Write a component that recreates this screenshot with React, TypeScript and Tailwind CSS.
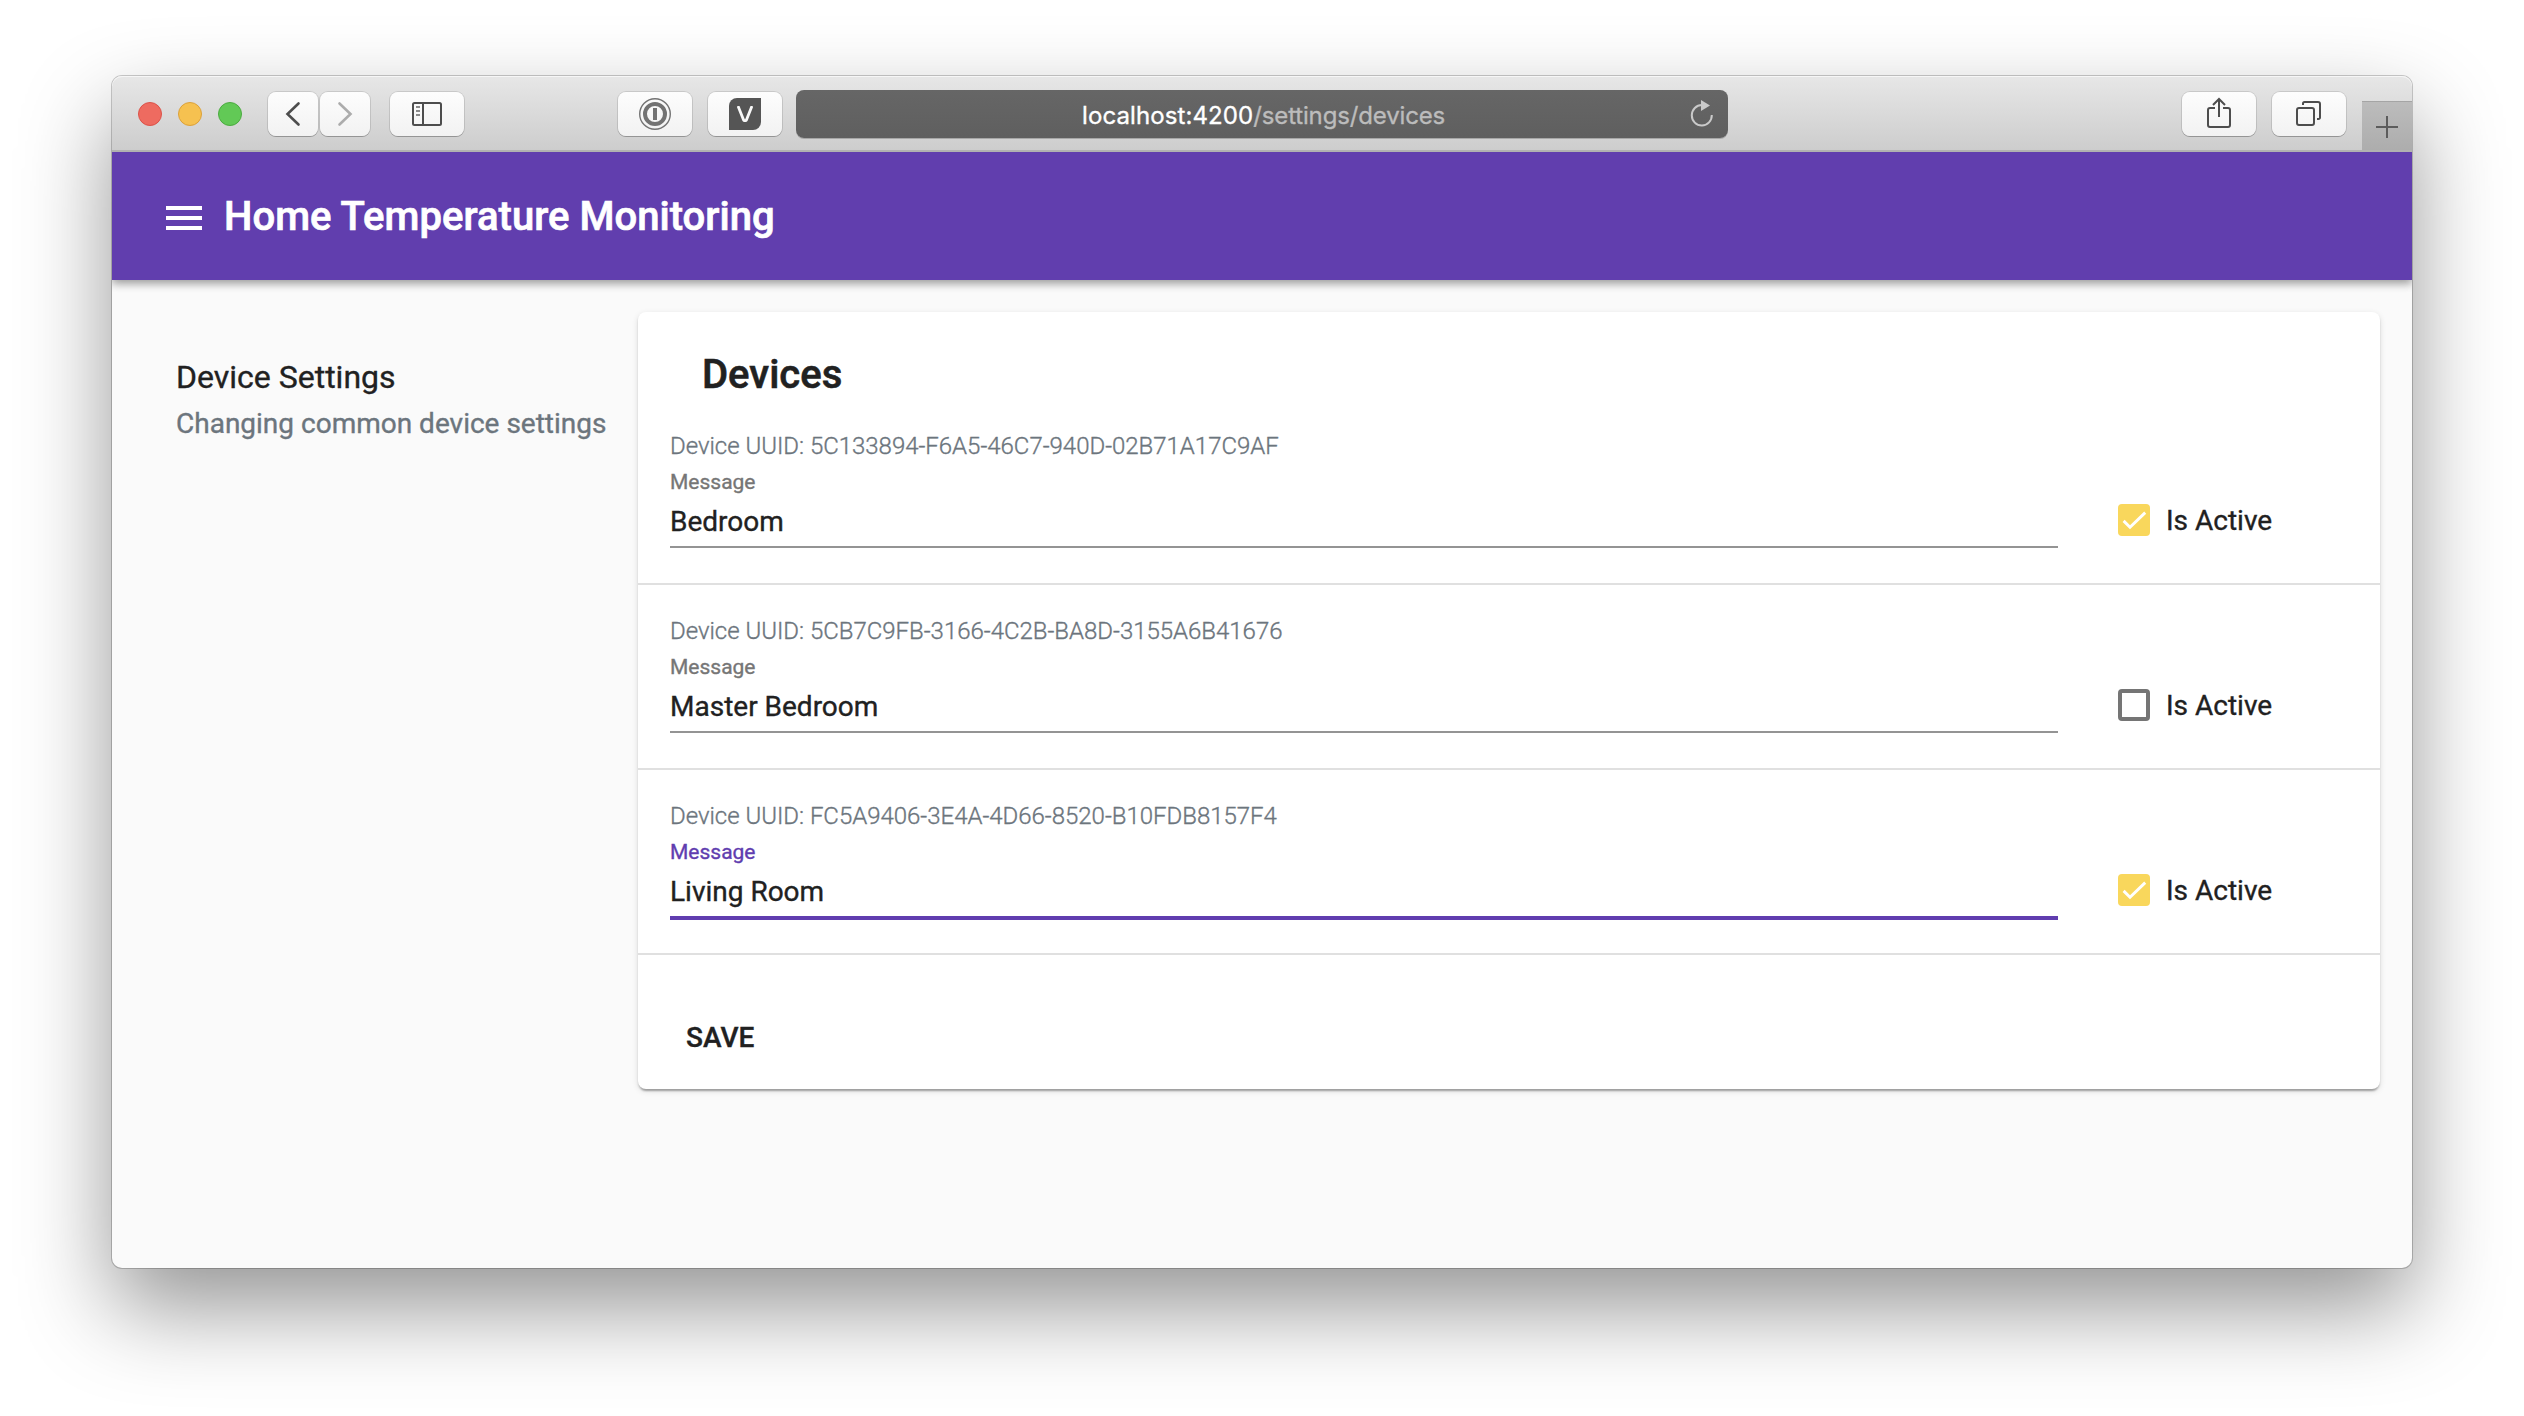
import React from "react";

type Device = { uuid: string; name: string; active: boolean; focused?: boolean };

const devices: Device[] = [
  { uuid: "5C133894-F6A5-46C7-940D-02B71A17C9AF", name: "Bedroom", active: true },
  { uuid: "5CB7C9FB-3166-4C2B-BA8D-3155A6B41676", name: "Master Bedroom", active: false },
  { uuid: "FC5A9406-3E4A-4D66-8520-B10FDB8157F4", name: "Living Room", active: true, focused: true },
];

function ToolButton({ className, children }: { className: string; children: React.ReactNode }) {
  return (
    <button
      className={`flex h-11 shrink-0 items-center justify-center rounded-[8px] bg-gradient-to-b from-[#fdfdfd] to-[#f2f2f2] shadow-[0_0_0_1px_rgba(0,0,0,0.11),0_1px_0_0_rgba(0,0,0,0.2)] ${className}`}
    >
      {children}
    </button>
  );
}

function Toolbar() {
  return (
    <div className="flex h-[76px] items-start rounded-t-[10px] border-b-2 border-[#b1b1b1] bg-gradient-to-b from-[#e7e7e7] to-[#cdcdcd] shadow-[inset_0_1px_0_#f6f6f6]">
      <div className="mt-[26px] ml-[26px] flex gap-4">
        <span className="size-6 rounded-full border border-[#dc5249] bg-[#ee6b60]" />
        <span className="size-6 rounded-full border border-[#dca13a] bg-[#f6c150]" />
        <span className="size-6 rounded-full border border-[#4bab40] bg-[#62c956]" />
      </div>
      <div className="mt-4 ml-[26px] flex gap-[2px]">
        <ToolButton className="w-[50px]">
          <svg width="50" height="44" viewBox="0 0 50 44" fill="none" stroke="#4d4d4d" strokeWidth="2.6" strokeLinecap="round">
            <path d="M30.5 11.5 19.5 22 30.5 32.5" />
          </svg>
        </ToolButton>
        <ToolButton className="w-[50px]">
          <svg width="50" height="44" viewBox="0 0 50 44" fill="none" stroke="#acacac" strokeWidth="2.6" strokeLinecap="round">
            <path d="M19.5 11.5 30.5 22 19.5 32.5" />
          </svg>
        </ToolButton>
      </div>
      <ToolButton className="mt-4 ml-5 w-[74px]">
        <svg width="30" height="24" viewBox="0 0 30 24" fill="none" stroke="#4d4d4d" strokeWidth="2">
          <rect x="1" y="1" width="28" height="22" rx="1.5" />
          <path d="M11 1v22" />
          <path d="M4 5h4M4 9h4M4 13h4" stroke="#8a8a8a" />
        </svg>
      </ToolButton>
      <ToolButton className="mt-4 ml-[154px] w-[74px]">
        <svg width="32" height="32" viewBox="0 0 32 32" fill="none" stroke="#737373">
          <circle cx="16" cy="16" r="15.3" strokeWidth="1.4" />
          <circle cx="16" cy="16" r="10" strokeWidth="4" />
          <path d="M16 10v12" strokeWidth="4" />
        </svg>
      </ToolButton>
      <ToolButton className="mt-4 ml-4 w-[74px]">
        <span className="flex size-8 items-center justify-center rounded-tl-[8px] rounded-br-[8px] bg-[#555]">
          <svg width="16" height="16" viewBox="0 0 16 16" fill="none" stroke="#f8f8f8" strokeWidth="2.8">
            <path d="M1 0 6.8 14.6H9.2L15 0" strokeLinejoin="bevel" />
          </svg>
        </span>
      </ToolButton>
      <div className="mt-[14px] ml-[14px] flex h-12 w-[932px] shrink-0 items-center rounded-[8px] bg-gradient-to-b from-[#666] to-[#5f5f5f] shadow-[0_1px_0_rgba(0,0,0,0.2)]">
        <div className="mt-[3px] ml-[286px] w-[480px] font-['Inter',sans-serif] text-[24px] leading-[30px] tracking-[0.1px] whitespace-nowrap text-[#bcbcbc]">
          <span className="text-white">localhost:4200</span>
          <span className="tracking-[-0.15px]">/settings/devices</span>
        </div>
        <svg className="ml-[127px]" width="26" height="28" viewBox="0 0 26 28">
          <path d="M22.8 15A10 10.3 0 1 1 13 5" fill="none" stroke="#cacaca" strokeWidth="2" />
          <path d="M12 0v11l9-5.5z" fill="#cacaca" />
        </svg>
      </div>
      <ToolButton className="mt-4 ml-[454px] w-[74px]">
        <svg className="-mt-1" width="24" height="32" viewBox="0 0 24 32" fill="none" stroke="#4d4d4d" strokeWidth="2">
          <path d="M8 12H3a2 2 0 0 0-2 2v15a2 2 0 0 0 2 2h18a2 2 0 0 0 2-2V14a2 2 0 0 0-2-2h-5" />
          <path d="M12 21V3M6 9l6-6 6 6" />
        </svg>
      </ToolButton>
      <ToolButton className="mt-4 ml-4 w-[74px]">
        <svg className="mr-[2px] mb-[2px]" width="26" height="26" viewBox="0 0 26 26" fill="none" stroke="#4d4d4d" strokeWidth="2">
          <rect x="2" y="8" width="17" height="17" rx="2" />
          <path d="M8 5V3.5A1.5 1.5 0 0 1 9.5 2H23a2 2 0 0 1 2 2v13.5a1.5 1.5 0 0 1-1.5 1.5H22" />
        </svg>
      </ToolButton>
      <button className="mt-[25px] ml-4 flex h-[49px] w-[50px] shrink-0 items-center justify-center border-t border-[#a5a5a5] bg-gradient-to-b from-[#bcbcbc] to-[#adadad] pt-[2px]">
        <svg width="22" height="22" viewBox="0 0 22 22" stroke="#5c5c5c" strokeWidth="2">
          <path d="M11 0v22M0 11h22" />
        </svg>
      </button>
    </div>
  );
}

function Checkbox({ checked }: { checked: boolean }) {
  return checked ? (
    <span className="flex size-8 shrink-0 rounded-[4px] bg-[#f9d75c]">
      <svg width="32" height="32" viewBox="0 0 32 32" fill="none" stroke="#fff" strokeWidth="2.9">
        <path d="M5.6 16.9 12 23.3 27.2 8.6" />
      </svg>
    </span>
  ) : (
    <span className="size-8 shrink-0 rounded-[4px] border-4 border-[#757575]" />
  );
}

function DeviceRow({ device }: { device: Device }) {
  return (
    <div className="flex h-[185px] border-b-2 border-[#e0e0e0] px-8">
      <div className="w-[1388px]">
        <div className="mt-[30px] text-[24px] leading-8 font-light tracking-[-0.02px] whitespace-nowrap text-[#6c757d]">
          Device UUID: {device.uuid}
        </div>
        <div className={`mt-1 text-[21px] leading-8 ${device.focused ? "text-[#603daf]" : "text-[#767676]"}`}>Message</div>
        <div
          className={`mt-[2px] h-[46px] text-[28px] leading-[44px] ${
            device.focused ? "shadow-[0_4px_0_#603daf]" : "shadow-[0_2px_0_#949494]"
          }`}
        >
          {device.name}
        </div>
      </div>
      <label className="mt-[104px] ml-[60px] flex h-8 items-center gap-4 text-[28px]">
        <Checkbox checked={device.active} />
        <span className="pt-[2px] whitespace-nowrap">Is Active</span>
      </label>
    </div>
  );
}

export default function App() {
  return (
    <div className="h-[1416px] w-[2524px] overflow-hidden bg-white px-[112px] pt-[76px] font-['Roboto',sans-serif] text-[#212121] [-webkit-text-stroke:0.35px]">
      <div className="flex h-[1192px] w-[2300px] flex-col rounded-[10px] bg-[#fafafa] shadow-[0_0_0_1px_rgba(0,0,0,0.2),0_40px_90px_rgba(0,0,0,0.42)]">
        <Toolbar />
        <header className="z-10 flex h-32 shrink-0 items-center bg-[#613eae] pl-[54px] text-white shadow-[0_4px_8px_rgba(0,0,0,0.24),0_2px_10px_rgba(0,0,0,0.2)] [clip-path:inset(0_0_-30px_0)]">
          <div className="mt-1 flex w-9 flex-col gap-[6px]">
            <span className="h-1 bg-white" />
            <span className="h-1 bg-white" />
            <span className="h-1 bg-white" />
          </div>
          <h1 className="mt-[2px] ml-[22px] text-[40px] leading-[48px] font-medium tracking-[0.04px] whitespace-nowrap [-webkit-text-stroke:0.7px]">Home Temperature Monitoring</h1>
        </header>
        <div className="flex pt-8 pl-16">
          <aside className="w-[462px] pt-[41px]">
            <div className="text-[32px] leading-[48px]">Device Settings</div>
            <div className="pt-px text-[28px] leading-[44px] whitespace-nowrap text-[#6c757d]">Changing common device settings</div>
          </aside>
          <main className="h-[777px] w-[1742px] rounded-[8px] bg-white shadow-[0_4px_2px_-2px_rgba(0,0,0,0.2),0_2px_2px_rgba(0,0,0,0.14),0_2px_6px_rgba(0,0,0,0.12)]">
            <h2 className="-mb-[2px] h-[90px] pt-[39px] pl-16 text-[40px] leading-[48px] font-medium [-webkit-text-stroke:0.6px]">Devices</h2>
            {devices.map((d) => (
              <DeviceRow key={d.uuid} device={d} />
            ))}
            <button className="mt-[47px] ml-8 h-[72px] px-4 text-[28px] font-medium">SAVE</button>
          </main>
        </div>
      </div>
    </div>
  );
}
